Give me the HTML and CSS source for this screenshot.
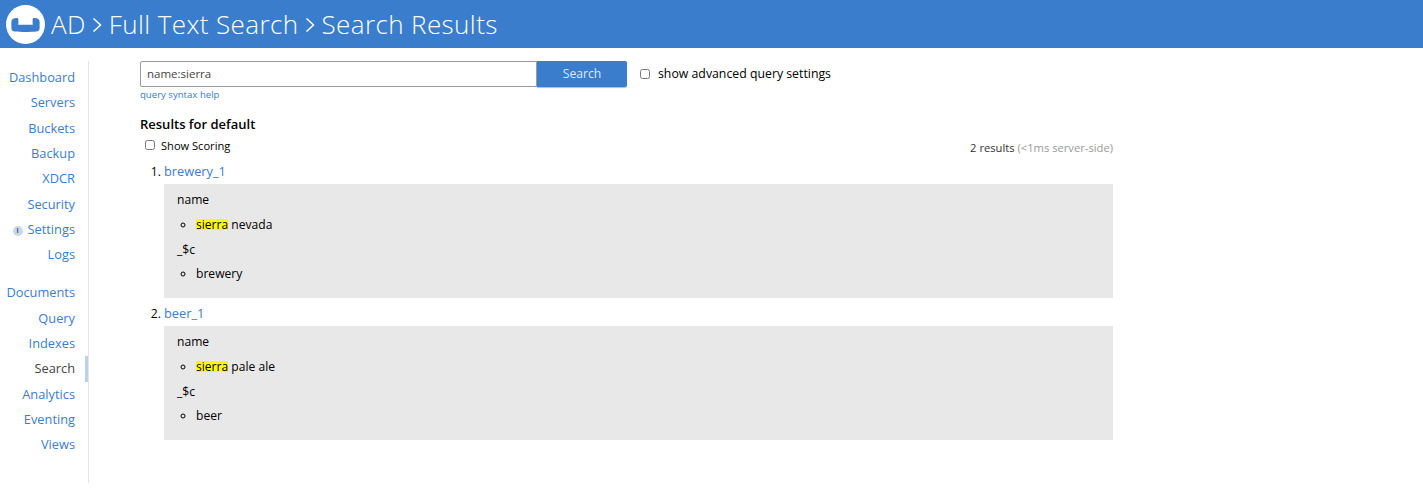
FILE: index.html
```html
<!DOCTYPE html>
<html>

<head>
  <meta charset="utf-8">
  <meta name="viewport" content="width=device-width, initial-scale=1">
  <title>Search Results</title>
  <link rel="stylesheet" href="styles.css">
</head>

<body>
  <header class="topbar">
    <svg class="logo" width="39" height="39" viewBox="0 0 40 40">
      <circle cx="20" cy="20" r="20" fill="#fff"/>
      <path d="M5.500 17.500C5.500 15.200 6.900 13.800 9 13.600L11 13.400C12 13.300 12.700 14 12.700 15V20.600C16.500 20.300 23.500 20.300 27.300 20.600V15C27.300 14 28 13.300 29 13.400L31 13.600C33.100 13.800 34.500 15.200 34.500 17.500V23.500C34.500 25.700 33.300 27 31 27.200C25 27.800 15 27.800 9 27.200C6.700 27 5.500 25.700 5.500 23.500Z" fill="#3a7dcc"/>
    </svg>
    <h1 class="crumbs">
      <span>AD</span>
      <svg class="chev" width="10" height="16" viewBox="0 0 10 16"><path d="M1.500 1.500l7 6.500-7 6.500" fill="none" stroke="#fff" stroke-width="1.500"/></svg>
      <span>Full Text Search</span>
      <svg class="chev" width="10" height="16" viewBox="0 0 10 16"><path d="M1.500 1.500l7 6.500-7 6.500" fill="none" stroke="#fff" stroke-width="1.500"/></svg>
      <span>Search Results</span>
    </h1>
  </header>

  <div class="page">
    <nav class="sidenav">
      <div class="navgroup">
        <a href="#">Dashboard</a>
        <a href="#">Servers</a>
        <a href="#">Buckets</a>
        <a href="#">Backup</a>
        <a href="#">XDCR</a>
        <a href="#">Security</a>
        <a href="#"><span class="info">i</span>Settings</a>
        <a href="#">Logs</a>
      </div>
      <div class="navgroup">
        <a href="#">Documents</a>
        <a href="#">Query</a>
        <a href="#">Indexes</a>
        <a href="#" class="active">Search</a>
        <a href="#">Analytics</a>
        <a href="#">Eventing</a>
        <a href="#">Views</a>
      </div>
    </nav>

    <main class="content">
      <div class="searchrow">
        <input class="searchbox" type="text" value="name:sierra">
        <button type="button" class="butn">Search</button>
        <label class="advanced"><input type="checkbox"> show advanced query settings</label>
      </div>
      <a class="syntax" href="#">query syntax help</a>

      <div class="results">
        <h2>Results for default</h2>
        <div class="resultbar">
          <label class="scoring"><input type="checkbox"> Show Scoring</label>
          <div class="count">2 results <span>(&lt;1ms server-side)</span></div>
        </div>
        <ol class="hits">
          <li>
            <a href="#">brewery_1</a>
            <div class="fields">
              <div class="fname">name</div>
              <ul><li><mark>sierra</mark> nevada</li></ul>
              <div class="fname">_$c</div>
              <ul><li>brewery</li></ul>
            </div>
          </li>
          <li>
            <a href="#">beer_1</a>
            <div class="fields">
              <div class="fname">name</div>
              <ul><li><mark>sierra</mark> pale ale</li></ul>
              <div class="fname">_$c</div>
              <ul><li>beer</li></ul>
            </div>
          </li>
        </ol>
      </div>
    </main>
  </div>
</body>

</html>
```

FILE: styles.css
```css
body {
	margin: 0;
	background-color: #fff;
	color: #000;
	font-family: "Open Sans", sans-serif;
	font-size: 12px;
}

a {
	color: #3a7dcc;
	text-decoration: none;
}

.topbar {
	display: flex;
	align-items: center;
	height: 48px;
	padding-left: 6px;
	background-color: #3a7dcc;
}

.logo {
	flex: none;
}

.crumbs {
	display: flex;
	align-items: center;
	gap: 6.500px;
	margin: 0 0 0 6px;
	color: #fff;
	font-size: 26px;
	font-weight: 300;
	letter-spacing: 0.4px;
}

.chev {
	margin-top: 1px;
}

.page {
	display: flex;
}

.sidenav {
	flex: none;
	box-sizing: border-box;
	width: 89px;
	height: 422px;
	margin-top: 13px;
	padding-top: 4px;
	border-right: 1px solid #e6e6e6;
}

.navgroup {
	display: flex;
	flex-direction: column;
	margin-bottom: 12.600px;
}

.navgroup a {
	position: relative;
	height: 25.350px;
	padding-right: 13px;
	font-size: 12.800px;
	line-height: 25.350px;
	text-align: right;
}

.navgroup a.active {
	color: #444;
}

.navgroup a.active::after {
	content: "";
	position: absolute;
	top: 0;
	right: 0;
	width: 3px;
	height: 100%;
	background-color: #bcd2ea;
}

.info {
	display: inline-block;
	width: 10px;
	height: 10px;
	margin-right: 5px;
	border-radius: 50%;
	background-color: #c5d8ee;
	color: #556;
	font-size: 7px;
	font-weight: 700;
	line-height: 10px;
	text-align: center;
	vertical-align: 1px;
}

.content {
	width: 973px;
	margin: 13px 0 0 51px;
}

.searchrow {
	display: flex;
	align-items: center;
}

.searchbox {
	box-sizing: border-box;
	width: 397px;
	height: 26px;
	padding: 0 6px 2px;
	border: 1px solid #999;
	border-radius: 2px 0 0 2px;
	outline: none;
	color: #444;
	font-family: "Open Sans", sans-serif;
	font-size: 11.500px;
}

.butn {
	width: 90px;
	height: 26px;
	padding: 0 0 2px;
	border: 0;
	border-radius: 0 2px 2px 0;
	box-shadow: 0 1px 1px #bbb;
	background-color: #3a7dcc;
	color: #dce8f6;
	font-family: "Open Sans", sans-serif;
	font-size: 12.200px;
}

.advanced {
	display: flex;
	align-items: center;
	margin-left: 13px;
	padding-bottom: 2px;
	font-size: 12.300px;
}

.advanced input {
	width: 10px;
	height: 10px;
	margin: 2px 8px 0 0;
}

.syntax {
	display: block;
	margin-top: 1px;
	font-size: 9.600px;
	line-height: 13px;
}

.results {
	margin-top: 14px;
}

.results h2 {
	margin: 0;
	font-size: 13px;
	font-weight: 600;
	line-height: 18px;
}

.resultbar {
	display: flex;
	justify-content: space-between;
	align-items: center;
	margin-top: 4px;
	padding-left: 5px;
}

.scoring {
	display: flex;
	align-items: center;
	font-size: 11.100px;
}

.scoring input {
	width: 10px;
	height: 10px;
	margin: -2px 6px 0 0;
}

.count {
	padding-top: 3px;
	margin-bottom: -1px;
	font-size: 11.200px;
	color: #333;
}

.count span {
	color: #999;
}

.hits {
	margin: 8px 0 0;
	padding-left: 24px;
	font-size: 12.100px;
}

.hits > li {
	margin-bottom: 6px;
	line-height: 18px;
}

.hits > li > a {
	font-size: 12.800px;
}

.fields {
	height: 114px;
	box-sizing: border-box;
	margin-top: 3px;
	padding: 7px 13px 0;
	background-color: #e8e8e8;
	line-height: 18px;
}

.fields ul {
	margin: 6.750px 0;
	padding-left: 19px;
	list-style: circle;
}

mark {
	display: inline-block;
	background-color: #ff0;
	color: inherit;
	line-height: 11px;
}
```
